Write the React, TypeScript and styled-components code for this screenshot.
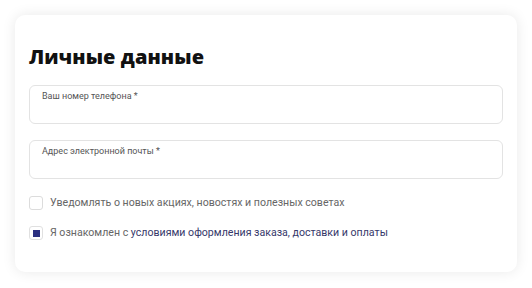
import { createGlobalStyle } from "styled-components";
import styled from "styled-components";

const GlobalStyle = createGlobalStyle`
    body {
        margin: 0;
        background: #ffffff;
        font-family: Roboto, "Liberation Sans", sans-serif;
    }
`;

export default function App() {
    return (
        <Page>
            <GlobalStyle />
            <Card>
                <Title>Личные данные</Title>
                <Field>
                    <Label>Ваш номер телефона *</Label>
                </Field>
                <Field>
                    <Label>Адрес электронной почты *</Label>
                </Field>
                <Checks>
                    <CheckRow>
                        <Box />
                        <CheckText>Уведомлять о новых акциях, новостях и полезных советах</CheckText>
                    </CheckRow>
                    <CheckRow>
                        <Box checked><Mark /></Box>
                        <CheckText>
                            Я ознакомлен с <Terms>условиями оформления заказа, доставки и оплаты</Terms>
                        </CheckText>
                    </CheckRow>
                </Checks>
            </Card>
        </Page>
    );
}

const Page = styled.div`
    padding: 15px 15px 16px 15px;
`;

const Card = styled.div`
    width: 502px;
    height: 257px;
    box-sizing: border-box;
    background: #fff;
    border-radius: 10px;
    box-shadow: 0 0 14px rgba(0, 0, 0, 0.09);
    padding: 30px 14px 0 14px;
    display: flex;
    flex-direction: column;
`;

const Title = styled.h2`
    margin: 0 0 16px 0;
    font-family: "Open Sans", "DejaVu Sans", sans-serif;
    font-weight: 800;
    font-size: 20px;
    line-height: 24px;
    color: #111;
    letter-spacing: 0.1px;
`;

const Field = styled.div`
    width: 474px;
    height: 39px;
    box-sizing: border-box;
    border: 1px solid #e3e3e3;
    border-radius: 6px;
    padding: 5px 12px;
    margin-bottom: 16px;
`;

const Label = styled.div`
    font-size: 9px;
    line-height: 11px;
    color: #555;
`;

const Checks = styled.div`
    display: flex;
    flex-direction: column;
    gap: 16px;
    margin-top: 1px;
`;

const CheckRow = styled.div`
    display: flex;
    align-items: center;
    gap: 7px;
`;

const Box = styled.div<{ checked?: boolean }>`
    width: 14px;
    height: 14px;
    box-sizing: border-box;
    border: 1px solid ${(p) => (p.checked ? "#e0e0e0" : "#dcdcdc")};
    border-radius: 3px;
    display: flex;
    align-items: center;
    justify-content: center;
    background: #fff;
`;

const Mark = styled.div`
    width: 7px;
    height: 7px;
    background: #2b2f80;
`;

const CheckText = styled.span`
    font-size: 10.6px;
    line-height: 14px;
    color: #666;
`;

const Terms = styled.span`
    color: #36386a;
`;
